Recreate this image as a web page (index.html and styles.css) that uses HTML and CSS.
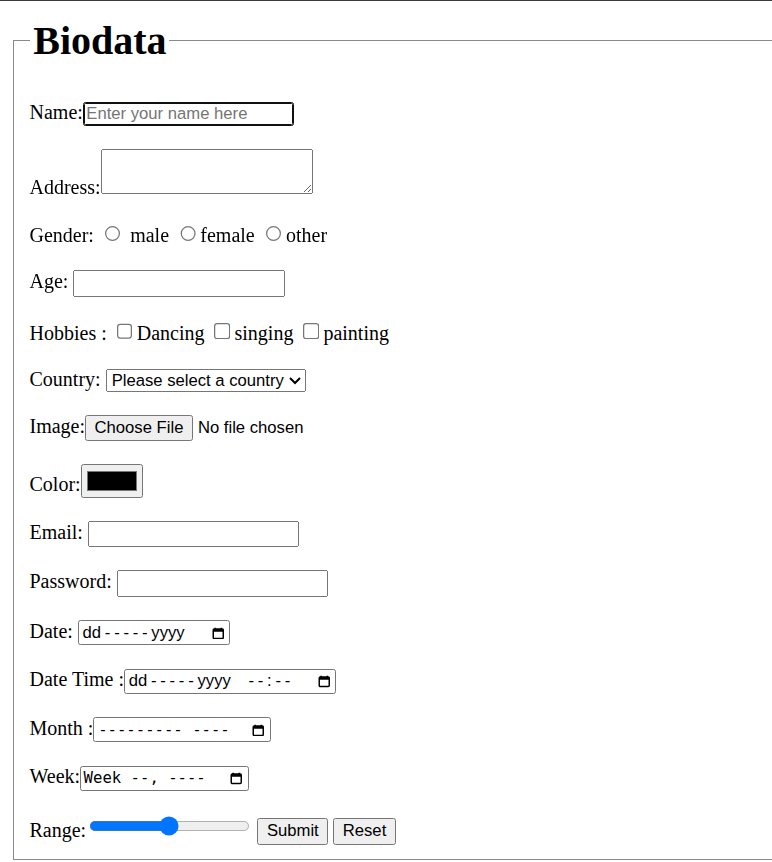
FILE: index.html
```html
<!DOCTYPE html>
<html lang="en">
<head>
<meta charset="utf-8">
<title>Biodata</title>
<link rel="stylesheet" href="styles.css">
</head>
<body>
<fieldset class="card">
<legend class="title">Biodata</legend>
<form class="bio">
Name:<input class="field focused" type="text" placeholder="Enter your name here" autofocus><br><br>
Address:<textarea class="area"></textarea><br><br>
Gender: <input type="radio" name="gender"> male <input type="radio" name="gender">female <input type="radio" name="gender">other<br><br>
Age: <input class="field" type="text"><br><br>
Hobbies : <input type="checkbox">Dancing <input type="checkbox">singing <input type="checkbox">painting<br><br>
Country: <select class="pick"><option>Please select a country</option></select><br><br>
Image:<input class="file" type="file"><br><br>
Color:<input type="color" value="#000000"><br><br>
Email: <input class="field" type="email"><br><br>
Password: <input class="field" type="password"><br><br>
Date: <span class="datebox w-date"><span class="dtext">dd<span class="dashes">-----</span>yyyy</span><svg class="cal" viewBox="0 0 10 10" aria-hidden="true"><path d="M2.5 0.5v1.5M7.5 0.5v1.5" stroke="#000" stroke-width="1.2"/><rect x="1" y="1.6" width="8" height="7.6" rx="0.8" fill="none" stroke="#000" stroke-width="1.2"/><rect x="1" y="1.6" width="8" height="2.2" fill="#000"/></svg></span><br><br>
Date Time :<span class="datebox w-dt"><span class="dtext">dd<span class="dashes">-----</span>yyyy&nbsp;&nbsp; <span class="dashes">--</span>:<span class="dashes">--</span></span><svg class="cal" viewBox="0 0 10 10" aria-hidden="true"><path d="M2.5 0.5v1.5M7.5 0.5v1.5" stroke="#000" stroke-width="1.2"/><rect x="1" y="1.6" width="8" height="7.6" rx="0.8" fill="none" stroke="#000" stroke-width="1.2"/><rect x="1" y="1.6" width="8" height="2.2" fill="#000"/></svg></span><br><br>
Month :<span class="datebox w-month"><span class="mtext">--------- ----</span><svg class="cal" viewBox="0 0 10 10" aria-hidden="true"><path d="M2.5 0.5v1.5M7.5 0.5v1.5" stroke="#000" stroke-width="1.2"/><rect x="1" y="1.6" width="8" height="7.6" rx="0.8" fill="none" stroke="#000" stroke-width="1.2"/><rect x="1" y="1.6" width="8" height="2.2" fill="#000"/></svg></span><br><br>
Week:<span class="datebox w-week"><span class="mtext">Week --, ----</span><svg class="cal" viewBox="0 0 10 10" aria-hidden="true"><path d="M2.5 0.5v1.5M7.5 0.5v1.5" stroke="#000" stroke-width="1.2"/><rect x="1" y="1.6" width="8" height="7.6" rx="0.8" fill="none" stroke="#000" stroke-width="1.2"/><rect x="1" y="1.6" width="8" height="2.2" fill="#000"/></svg></span><br><br>
Range:<input class="range" type="range"> <input class="btn" type="submit" value="Submit"> <input class="btn" type="reset" value="Reset">
</form>
</fieldset>
</body>
</html>
```
FILE: styles.css
```css
html {
  overflow: hidden;
  border-top: 1px solid #3a3a3a;
}
body {
  zoom: 1.25;
  margin: 12.8px 0 0 8px;
  font-family: "Liberation Serif", "Times New Roman", serif;
  font-size: 16px;
  color: #000;
  background: #fff;
}
.card {
  margin: 0 0 0 2px;
  padding: 0 12px 11.5px 12.8px;
  border: 1px solid #8a8a8a;
  border-right: 0;
}
.title {
  font-size: 32px;
  font-weight: bold;
  padding: 0 2px 0 3px;
}
.bio {
  padding-top: 29.4px;
}
.field, .file, .btn, .pick {
  font-family: "Liberation Sans", Arial, sans-serif;
  font-size: 13.333px;
}
.field {
  width: 169px;
  box-sizing: border-box;
}
.focused {
  border: 1px solid #101010;
  outline: 1px solid #101010;
  outline-offset: -2px;
  border-radius: 2px;
}
.area {
  width: 170px;
  height: 36px;
  box-sizing: border-box;
  font-family: "Liberation Mono", monospace;
  font-size: 13.333px;
}
.datebox {
  display: inline-flex;
  align-items: center;
  justify-content: space-between;
  box-sizing: border-box;
  height: 20px;
  padding: 0 4px 0 3px;
  border: 1px solid #767676;
  border-radius: 2px;
  font-family: "Liberation Sans", Arial, sans-serif;
  font-size: 13.333px;
  line-height: 16px;
  vertical-align: baseline;
}
.w-date { width: 122px; }
.w-dt { width: 170px; }
.w-month { width: 142px; }
.w-week { width: 135px; padding-left: 2px; }
.dashes {
  letter-spacing: 3px;
  padding-left: 3px;
}
.mtext {
  font-family: "DejaVu Sans Mono", "Liberation Mono", monospace;
  font-size: 12.5px;
  white-space: pre;
}
.cal {
  width: 10px;
  height: 10px;
  flex: none;
}
.range {
  vertical-align: baseline;
}
```
